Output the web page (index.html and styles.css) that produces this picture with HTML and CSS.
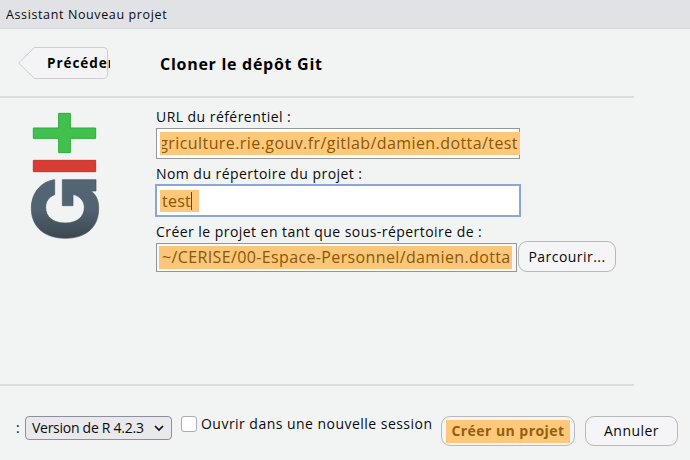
FILE: index.html
```html
<!DOCTYPE html>
<html lang="fr">
<head>
<meta charset="utf-8">
<title>Assistant Nouveau projet</title>
<link rel="stylesheet" href="styles.css">
</head>
<body>
<div class="dialog">
  <header class="titlebar"><span class="t-title">Assistant Nouveau projet</span></header>
  <div class="wizard-head">
    <div class="back">
      <svg class="back-shape" width="92" height="34" viewBox="0 0 92 34"><path d="M16.500 .5H86Q89.500 .5 89.500 4V27Q89.500 31.500 85.500 31.500H16.500L.7 16Z" fill="#f4f4f6" stroke="#cdcdcd"/></svg>
      <span class="back-text">Précédent</span>
    </div>
    <h1 class="t-head">Cloner le dépôt Git</h1>
  </div>
  <main class="content">
    <svg class="logo" width="100" height="150" viewBox="0 0 300 450">
      <defs><linearGradient id="slate" x1="0" y1="0" x2="0" y2="1"><stop offset="0" stop-color="#536675"/><stop offset=".5" stop-color="#526371"/><stop offset="1" stop-color="#3c474f"/></linearGradient></defs>
      <path d="M116 40H151V84H227V115H151V158H116V115H40V84H116Z" fill="#41c04d" stroke="#2cab3b" stroke-width="3" stroke-linejoin="round"/>
      <path d="M40 181H227V215H40Z" fill="#d83d34" stroke="#c9322b" stroke-width="3"/>
      <path d="M104 239C70 243 34 272 34 325C34 382 75 415 136 415C198 415 236 382 236 325C236 302 229 286 214 273H228V239H127V317H159V283C180 289 193 303 193 322C193 350 172 369 136 369C98 369 77 350 77 322C77 303 87 291 104 284Z" fill="url(#slate)" stroke="#46545f" stroke-width="2"/>
    </svg>
    <div class="form">
      <div class="label"><span class="t-l1">URL du référentiel :</span></div>
      <div class="input url"><div class="mark"><span class="t-url">agriculture.rie.gouv.fr/gitlab/damien.dotta/test</span></div></div>
      <div class="label"><span class="t-l2">Nom du répertoire du projet :</span></div>
      <div class="input name"><div class="mark"><span class="t-name">test</span><i class="caret"></i></div></div>
      <div class="label"><span class="t-l3">Créer le projet en tant que sous-répertoire de :</span></div>
      <div class="dir-row">
        <div class="input dir"><div class="mark"><span class="t-dir">~/CERISE/00-Espace-Personnel/damien.dotta</span></div></div>
        <div class="button browse"><span class="t-browse">Parcourir...</span></div>
      </div>
    </div>
  </main>
  <footer class="footer">
    <span class="colon">:</span>
    <div class="select"><span class="t-select">Version de R 4.2.3</span><svg width="10" height="7" viewBox="0 0 10 7"><path d="M1 1L5 5L9 1" fill="none" stroke="#111" stroke-width="1.700"/></svg></div>
    <div class="checkbox"></div>
    <span class="check-label t-check">Ouvrir dans une nouvelle session</span>
    <div class="button create"><div class="mark"><span class="t-create">Créer un projet</span></div></div>
    <div class="button cancel"><span class="t-cancel">Annuler</span></div>
  </footer>
</div>
</body>
</html>
```
FILE: styles.css
```css
* { box-sizing: border-box; }
body { margin: 0; background: #f3f4f4; color: #0b0b0b; font: 14px/18px "Open Sans", "Noto Sans", sans-serif; overflow: hidden; }
.dialog { width: 690px; height: 460px; background: #f2f4f4; white-space: nowrap; }
.titlebar { height: 29px; background: #e1e2e6; border-bottom: 1px solid #d9dadd; padding: 6px 0 0 6px; font-size: 12.5px; letter-spacing: .62px; }
.wizard-head { width: 634px; height: 69px; border-bottom: 2px solid #dcdedd; padding: 18px 0 0 18px; display: flex; }
.back { position: relative; width: 92px; height: 34px; overflow: hidden; flex: none; }
.back-shape { display: block; }
.back-text { position: absolute; left: 29px; top: 7px; width: 63px; overflow: hidden; font-weight: 700; font-size: 13.5px; letter-spacing: .95px; color: #000; }
h1 { margin: 7px 0 0 50px; font-size: 16px; line-height: 20px; font-weight: 700; letter-spacing: .72px; color: #000; }
.content { height: 286px; padding: 2px 0 0 20px; display: flex; }
.logo { flex: none; }
.form { margin: 8px 0 0 36px; }
.label { height: 18px; margin-bottom: 2px; letter-spacing: .45px; }
.input { background: #fff; border: 1px solid #969696; color: #8b5707; font-size: 16px; line-height: 22px; display: flex; }
.input .mark { background: #fec87a; }
.url { width: 364px; height: 31px; padding: 3px 0 3px 3px; margin-bottom: 6px; }
.url .mark { width: 360px; padding: 0 2px; display: flex; justify-content: flex-end; overflow: clip; overflow-clip-margin: content-box; }
.t-url { flex: none; letter-spacing: .42px; }
.name { width: 366px; height: 33px; margin: -1px -1px 6px -1px; border: 2px solid #8aa6db; padding: 4px 0 3px 3px; }
.name .mark { width: 39px; padding-left: 2px; display: flex; letter-spacing: .25px; }
.caret { width: 1px; height: 18px; background: #704500; margin-top: 2px; }
.dir-row { display: flex; gap: 1px; }
.dir { width: 361px; height: 29px; padding: 2px; background: #f6f7f7; letter-spacing: .37px; }
.dir .mark { width: 353px; padding-left: 3px; background: #fac67a; }
.button { border: 1px solid #b9b9b9; border-radius: 9px; background: #f5f5f7; display: flex; align-items: center; justify-content: center; color: #080808; letter-spacing: .45px; }
.browse { width: 98px; height: 31px; margin-top: -2px; }
.footer { width: 690px; height: 76px; display: flex; align-items: flex-start; padding: 32px 0 0 16px; background: linear-gradient(#dcdedd, #dcdedd) 0 0 / 634px 2px no-repeat; }
.colon { width: 9px; margin-top: 3px; }
.select { width: 147px; height: 24px; border: 1px solid #8f8f9d; border-radius: 4px; background: #e9e9ed; display: flex; align-items: center; justify-content: space-between; padding: 0 7px 0 6px; letter-spacing: -.27px; }
.checkbox { width: 16px; height: 16px; border: 1px solid #adadad; border-radius: 3px; background: #fff; margin: 0 4px 0 9px; }
.check-label { width: 240px; margin-top: -1px; letter-spacing: .47px; }
.create { width: 134px; height: 30px; }
.create .mark { width: 124px; height: 23px; background: #fec87a; color: #91600f; font-weight: 700; line-height: 22px; text-align: center; }
.cancel { width: 93px; height: 30px; margin-left: 10px; }
```
